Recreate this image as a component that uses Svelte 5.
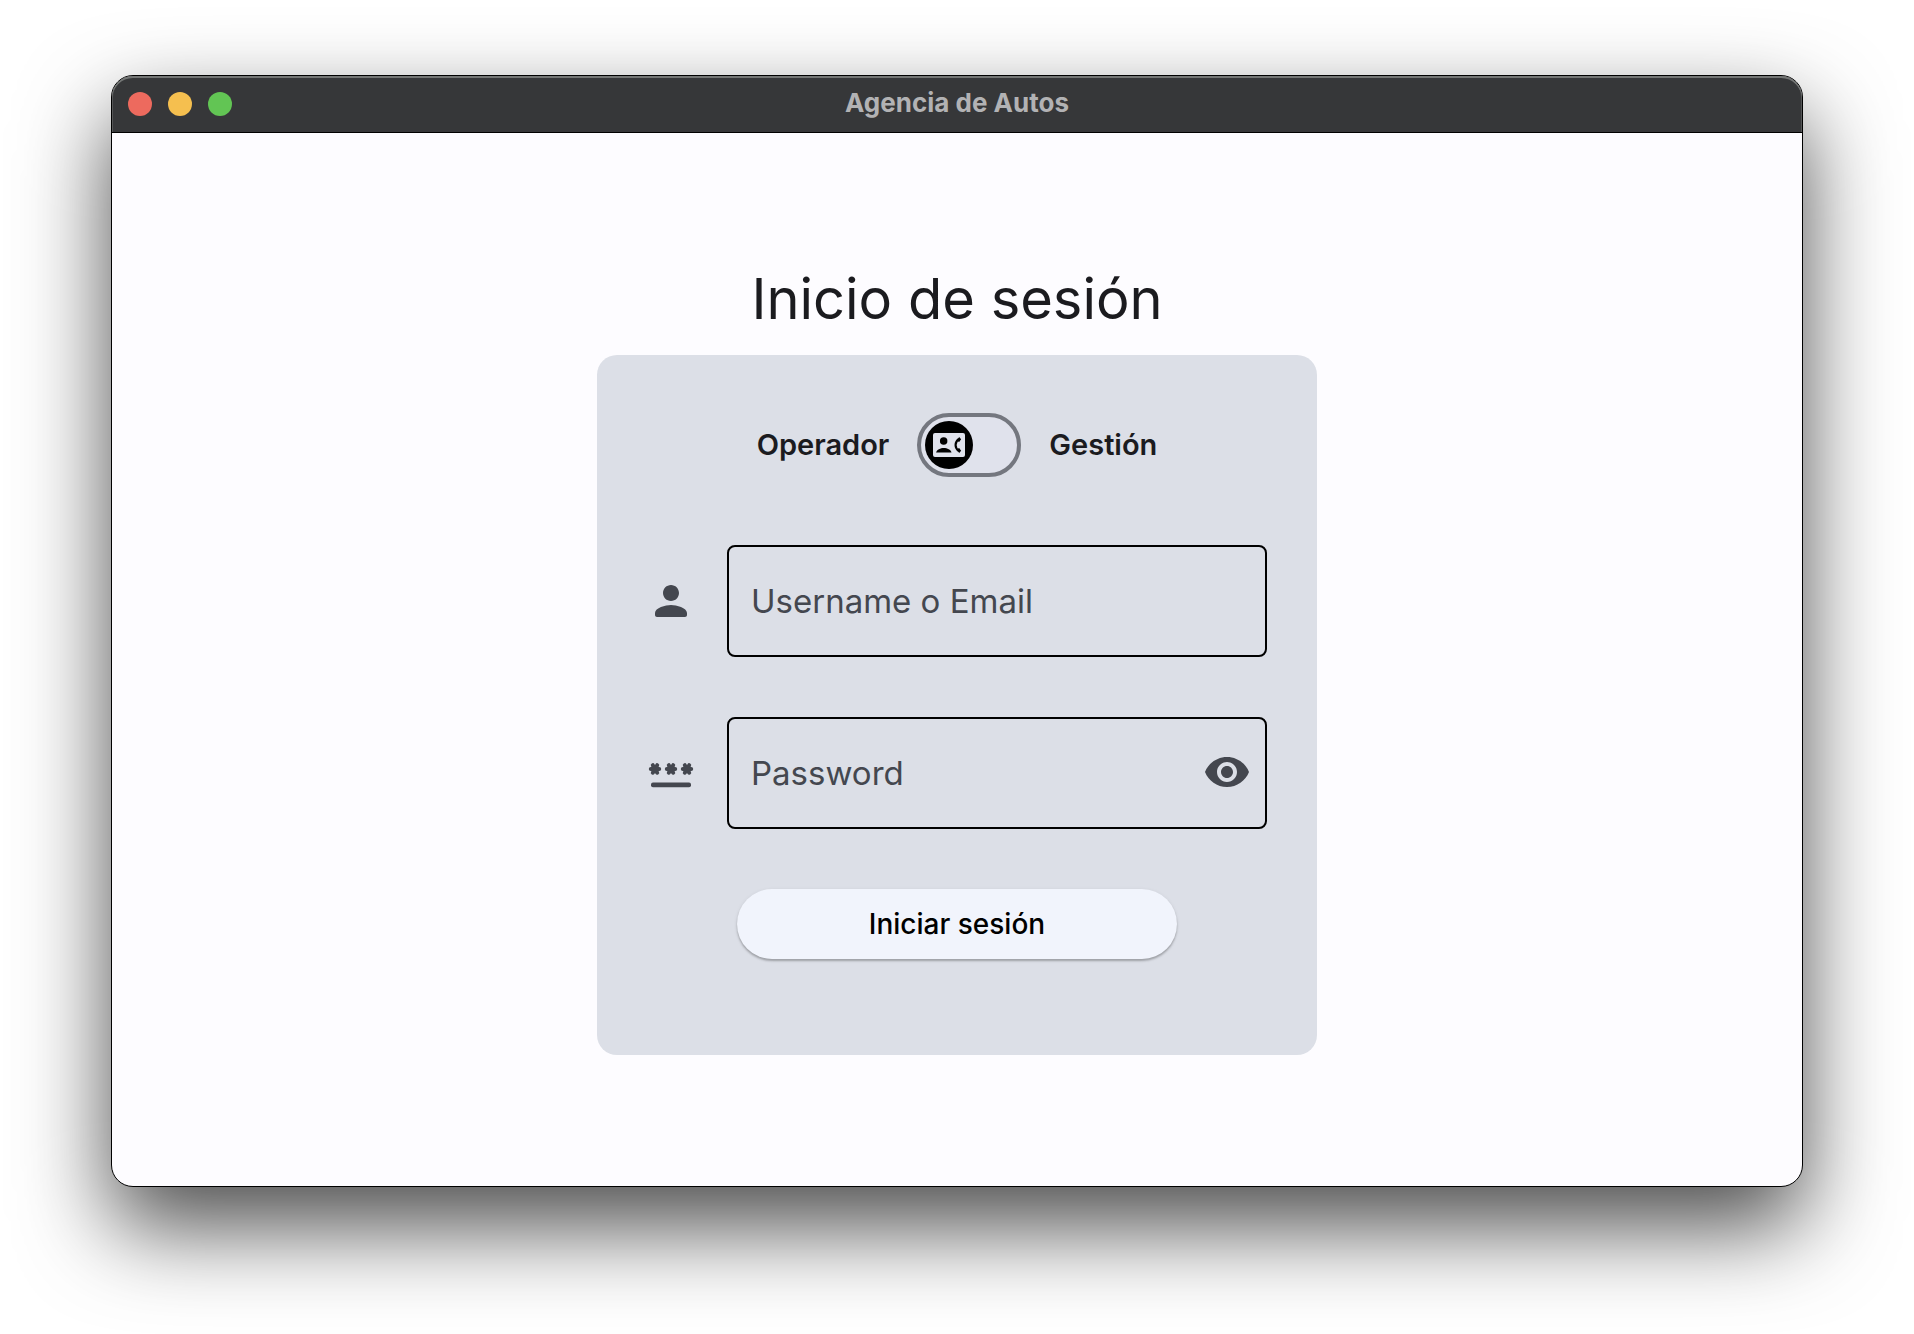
<script>
  let management = $state(false);
  let visible = $state(false);
  let username = $state('');
  let password = $state('');
  const lights = ['close', 'minimise', 'zoom'];
</script>

<div class="desktop">
  <div class="window">
    <header class="titlebar">
      <div class="lights">
        {#each lights as light}
          <button type="button" class="light {light}" aria-label={light}></button>
        {/each}
      </div>
      <span class="title">Agencia de Autos</span>
    </header>

    <main class="content">
      <h1>Inicio de sesión</h1>

      <form class="card" onsubmit={(e) => e.preventDefault()}>
        <div class="mode">
          <label for="mode">Operador</label>
          <span class="switch">
            <input id="mode" type="checkbox" role="switch" bind:checked={management} />
            <span class="thumb">
              <svg viewBox="0 0 24 24" aria-hidden="true">
                <rect class="plate" x="0" y="3" width="24" height="18" rx="1.5" />
                <circle cx="8" cy="9" r="2.8" />
                <path d="M2.300 17.700c.6-2.400 3.200-3.500 5.800-3.500s5.200 1.100 5.800 3.500z" />
                <path class="cord" d="M19.400 7.400c-3.300 2.600-3.300 6.700 0 9.300" />
                <path d="M19.600 6l1.500 1.700-1.500 2-1.800-.8zM19.600 18l1.500-1.700-1.500-2-1.800.8z" />
              </svg>
            </span>
          </span>
          <label for="mode">Gestión</label>
        </div>

        <div class="row">
          <svg class="icon" viewBox="0 0 24 24" aria-hidden="true">
            <path d="M12 12c2.210 0 4-1.790 4-4s-1.790-4-4-4-4 1.790-4 4 1.790 4 4 4zm0 2c-2.670 0-8 1.340-8 4v1c0 .55.45 1 1 1h14c.55 0 1-.45 1-1v-1c0-2.660-5.330-4-8-4z" />
          </svg>
          <div class="field">
            <input type="text" aria-label="Username o Email" placeholder="Username o Email" bind:value={username} />
          </div>
        </div>

        <div class="row">
          <svg class="icon" viewBox="0 0 24 24" aria-hidden="true">
            <rect x="2" y="16.7" width="20" height="2.4" rx="1" />
            {#each [4, 12, 20] as x}
              <path class="star" d="M{x - 2.1} 9.970h4.200M{x - 1.1} 8.070l2.200 3.800M{x + 1.1} 8.070l-2.200 3.800" />
            {/each}
          </svg>
          <div class="field">
            <input type={visible ? 'text' : 'password'} aria-label="Password" placeholder="Password" bind:value={password} />
            <button type="button" class="eye" aria-label="Mostrar password" aria-pressed={visible} onclick={() => (visible = !visible)}>
              <svg class="icon" viewBox="0 0 24 24" aria-hidden="true">
                <path d="M12 4C7 4 2.730 7.110 1 11.500 2.730 15.890 7 19 12 19s9.270-3.110 11-7.500C21.270 7.110 17 4 12 4zm0 12.500c-2.760 0-5-2.240-5-5s2.240-5 5-5 5 2.240 5 5-2.240 5-5 5zm0-8c-1.660 0-3 1.340-3 3s1.340 3 3 3 3-1.340 3-3-1.340-3-3-3z" />
              </svg>
            </button>
          </div>
        </div>

        <button type="submit" class="submit">Iniciar sesión</button>
      </form>
    </main>
  </div>
</div>

<style>
  :global(body) {
    background: #fff;
  }

  .desktop,
  .desktop * {
    box-sizing: border-box;
  }

  .desktop {
    display: flex;
    min-height: 100vh;
    padding: 75px 111px 147px;
    font-family: Inter, 'Liberation Sans', sans-serif;
    color: #1b1b1f;
    overflow: hidden;
  }

  .window {
    flex: 1;
    min-width: 0;
    display: flex;
    flex-direction: column;
    border: 1px solid #000;
    border-radius: 22px;
    background: #fdfcff;
    box-shadow: 0 40px 90px rgba(0, 0, 0, 0.7);
  }

  .titlebar {
    display: grid;
    grid-template-columns: 1fr auto 1fr;
    align-items: center;
    height: 57px;
    padding: 0 16px;
    background: #363739;
    border-bottom: 1px solid #000;
    border-radius: 21px 21px 0 0;
    box-shadow: inset 0 2px 0 #747675, inset 1px 0 0 #555657, inset -1px 0 0 #555657;
  }

  .lights {
    display: flex;
    gap: 16px;
  }

  .light {
    width: 24px;
    height: 24px;
    padding: 0;
    border: 0;
    border-radius: 50%;
  }

  .close {
    background: #ed6a5e;
  }

  .minimise {
    background: #f5bf4f;
  }

  .zoom {
    background: #62c554;
  }

  .title {
    padding-bottom: 2px;
    font-size: 26px;
    line-height: 32px;
    font-weight: 700;
    color: #b2b2b4;
  }

  .content {
    flex: 1;
    display: flex;
    flex-direction: column;
    align-items: center;
    justify-content: center;
    gap: 20px;
    padding-bottom: 1px;
  }

  h1 {
    margin: 0;
    font-size: 56px;
    line-height: 72px;
    font-weight: 400;
  }

  .card {
    display: flex;
    flex-direction: column;
    gap: 60px;
    width: 100%;
    max-width: 720px;
    padding: 50px 50px 96px;
    border-radius: 20px;
    background: #dcdfe7;
  }

  .mode {
    display: flex;
    align-items: center;
    justify-content: center;
    gap: 28px;
    height: 80px;
    font-size: 29px;
    line-height: 40px;
    font-weight: 600;
  }

  .switch {
    position: relative;
    display: flex;
  }

  .switch input {
    appearance: none;
    width: 104px;
    height: 64px;
    margin: 0;
    border: 4px solid #74777f;
    border-radius: 32px;
    background: #e0e2ec;
  }

  .thumb {
    position: absolute;
    top: 8px;
    left: 8px;
    display: grid;
    place-items: center;
    width: 48px;
    height: 48px;
    border-radius: 50%;
    background: #000;
    pointer-events: none;
  }

  .switch input:checked + .thumb {
    left: 48px;
  }

  .thumb svg {
    width: 32px;
    height: 32px;
    fill: #000;
  }

  .thumb .plate {
    fill: #e0e2ec;
  }

  .thumb .cord {
    fill: none;
    stroke: #000;
    stroke-width: 1.6;
  }

  .row {
    display: flex;
    align-items: center;
    gap: 32px;
  }

  .icon {
    flex: none;
    display: block;
    width: 48px;
    height: 48px;
    fill: #44474f;
  }

  .star {
    fill: none;
    stroke: #44474f;
    stroke-width: 2;
    stroke-linecap: round;
  }

  .field {
    flex: 1;
    min-width: 0;
    display: flex;
    align-items: center;
    height: 112px;
    padding: 0 14px 0 22px;
    border: 2px solid #000;
    border-radius: 8px;
  }

  .field input {
    flex: 1;
    min-width: 0;
    padding: 0;
    border: 0;
    outline: 0;
    background: none;
    font: inherit;
    font-size: 33px;
    line-height: 48px;
    color: #1b1b1f;
  }

  .field input::placeholder {
    color: #44474f;
    opacity: 1;
  }

  .eye {
    padding: 0;
    border: 0;
    background: none;
  }

  .submit {
    align-self: center;
    width: 100%;
    max-width: 440px;
    height: 70px;
    padding: 0;
    border: 0;
    border-radius: 35px;
    background: #f1f4fc;
    box-shadow: 0 2px 2px rgba(0, 0, 0, 0.24), 0 1px 4px rgba(0, 0, 0, 0.08);
    font: inherit;
    font-size: 28px;
    line-height: 40px;
    font-weight: 500;
    color: #000;
  }
</style>
